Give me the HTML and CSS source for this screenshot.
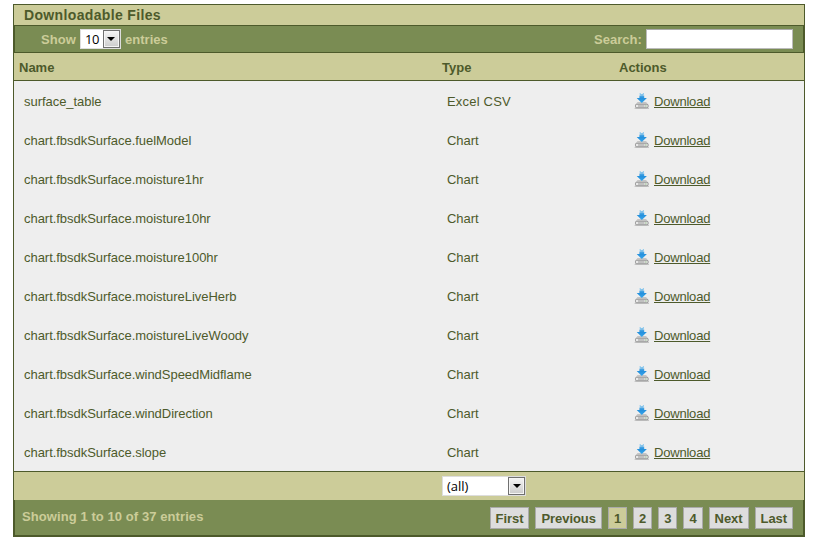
FILE: index.html
```
<!DOCTYPE html>
<html lang="en">
<head>
<meta charset="utf-8">
<title>Downloadable Files</title>
<link rel="stylesheet" href="styles.css">
</head>
<body>
<svg width="0" height="0" class="defs">
  <defs>
    <linearGradient id="blue" x1="0" y1="0" x2="0" y2="1"><stop offset="0" stop-color="#7cc4ee"/><stop offset=".5" stop-color="#2590dc"/><stop offset="1" stop-color="#37a6ec"/></linearGradient>
    <linearGradient id="grey" x1="0" y1="0" x2="0" y2="1"><stop offset="0" stop-color="#bbb"/><stop offset="1" stop-color="#eee"/></linearGradient>
    <symbol id="dl" viewBox="0 0 16 16">
      <path d="M3.5 9h8.6l1.8 2.6H1.7z" fill="url(#grey)"/>
      <rect x="1.5" y="11.2" width="12.6" height="3.6" rx="1.2" fill="#e8e8e8" stroke="#8c8c8c"/>
      <path d="M4 13h6.5" stroke="#999" stroke-width="1"/>
      <path d="M11.4 13h1" stroke="#60a050" stroke-width="1"/>
      <path d="M.6 15.4h14.4" stroke="#aaa" stroke-width=".7"/>
      <path d="M5.6 .3h1.2v1.2H5.6zM8.8 .3H10v1.2H8.8zM6.4 1.2h2.8v1H6.4zM5.4 2.4h4.8V5h2.7L7.8 10 2.7 5h2.7z" fill="url(#blue)"/>
    </symbol>
  </defs>
</svg>
<main class="panel">
  <h1 class="title">Downloadable Files</h1>
  <div class="toolbar">
    <label class="length"><span class="word">Show</span> <span class="select small"><span class="value">10</span><span class="arrow"></span></span> <span class="word">entries</span></label>
    <label class="search"><span class="word">Search:</span> <input type="text"></label>
  </div>
  <div class="row head"><span>Name</span><span>Type</span><span>Actions</span></div>
  <div class="rows">
    <div class="row"><span>surface_table</span><span class="csv">Excel CSV</span><span class="act"><svg><use href="#dl"/></svg><a>Download</a></span></div>
    <div class="row"><span>chart.fbsdkSurface.fuelModel</span><span>Chart</span><span class="act"><svg><use href="#dl"/></svg><a>Download</a></span></div>
    <div class="row"><span>chart.fbsdkSurface.moisture1hr</span><span>Chart</span><span class="act"><svg><use href="#dl"/></svg><a>Download</a></span></div>
    <div class="row"><span>chart.fbsdkSurface.moisture10hr</span><span>Chart</span><span class="act"><svg><use href="#dl"/></svg><a>Download</a></span></div>
    <div class="row"><span>chart.fbsdkSurface.moisture100hr</span><span>Chart</span><span class="act"><svg><use href="#dl"/></svg><a>Download</a></span></div>
    <div class="row"><span>chart.fbsdkSurface.moistureLiveHerb</span><span>Chart</span><span class="act"><svg><use href="#dl"/></svg><a>Download</a></span></div>
    <div class="row"><span>chart.fbsdkSurface.moistureLiveWoody</span><span>Chart</span><span class="act"><svg><use href="#dl"/></svg><a>Download</a></span></div>
    <div class="row"><span>chart.fbsdkSurface.windSpeedMidflame</span><span>Chart</span><span class="act"><svg><use href="#dl"/></svg><a>Download</a></span></div>
    <div class="row"><span>chart.fbsdkSurface.windDirection</span><span>Chart</span><span class="act"><svg><use href="#dl"/></svg><a>Download</a></span></div>
    <div class="row"><span>chart.fbsdkSurface.slope</span><span>Chart</span><span class="act"><svg><use href="#dl"/></svg><a>Download</a></span></div>
  </div>
  <div class="row filter"><span></span><span class="select wide"><span class="value">(all)</span><span class="arrow"></span></span></div>
  <div class="footer">
    <span class="info">Showing 1 to 10 of 37 entries</span>
    <nav class="pages"><a>First</a><a>Previous</a><a class="on">1</a><a>2</a><a>3</a><a>4</a><a>Next</a><a>Last</a></nav>
  </div>
</main>
</body>
</html>
```
FILE: styles.css
```
* { box-sizing: border-box; }
body { margin: 0; background: #fff; color: #4d5a2b; font: 13px/16px "Liberation Sans", Arial, sans-serif; overflow: hidden; }
.defs { display: block; height: 0; }
.panel { width: 792px; margin: 4px 0 0 13px; border: 1px solid #4d5a2b; border-bottom-width: 2px; }
.title { margin: 0; height: 20px; padding-left: 10px; background: #cccc99; font-size: 14px; line-height: 21px; font-weight: bold; letter-spacing: .35px; }
.toolbar { height: 28px; border: 1px solid #4d5a2b; background: #7a8c53; color: #cccc99; display: flex; justify-content: space-between; padding: 0 10px 0 26px; font-weight: bold; }
.toolbar label { display: flex; align-items: center; letter-spacing: .05px; }
.word { padding-top: 2px; }
.length { gap: 4px; }
.search { gap: 4px; }
.search input { width: 147px; height: 20px; border: 1px solid #bbb; border-top-color: #aaa; background: #fff; padding: 0; outline: 0; }
.select { display: flex; height: 20px; background: #fff; border: 1px solid #ddd; color: #000; font: 13px/18px "Open Sans", "DejaVu Sans", sans-serif; letter-spacing: 0; }
.select .value { flex: 1; padding-left: 4px; }
.small { width: 41px; letter-spacing: -.2px; }
.wide { width: 84px; }
.arrow { width: 17px; height: 18px; border: 1px solid #707070; background: linear-gradient(#f4f4f4, #ccc); display: flex; align-items: center; justify-content: center; box-shadow: inset 0 0 0 1px #f5f5f5; }
.arrow::after { content: ""; border: solid transparent; border-width: 4px 4px 0; border-top-color: #000; }
.row { display: grid; grid-template-columns: 423px 177px 1fr; height: 39px; align-items: center; padding-left: 10px; }
.rows { background: #eee; }
.rows .row { padding-top: 2px; letter-spacing: -.04px; }
.rows .csv { letter-spacing: .2px; }
.head { height: 28px; padding-left: 5px; background: #cccc99; border-bottom: 1px solid #4d5a2b; font-weight: bold; padding-top: 3px; letter-spacing: 0; }
.act { display: flex; align-items: center; padding-left: 10px; }
.act svg { width: 16px; height: 16px; margin: -1px 4px 1px 0; }
.act a { text-decoration: underline; letter-spacing: -.2px; }
.filter { height: 29px; padding-left: 5px; background: #cccc99; border-top: 1px solid #4d5a2b; }
.footer { height: 35px; background: #7a8c53; border: solid #4d5a2b; border-width: 0 1px; display: flex; justify-content: space-between; padding: 7px 10px 0 7px; font-weight: bold; }
.info { color: #cccc99; padding-top: 2px; letter-spacing: .08px; }
.pages { display: flex; gap: 6px; }
.pages a { height: 22px; line-height: 21px; padding: 0 5px; border: 1px solid #aaa; background: #ddd; letter-spacing: -.06px; }
.pages .on { background: #cccc99; }
```
